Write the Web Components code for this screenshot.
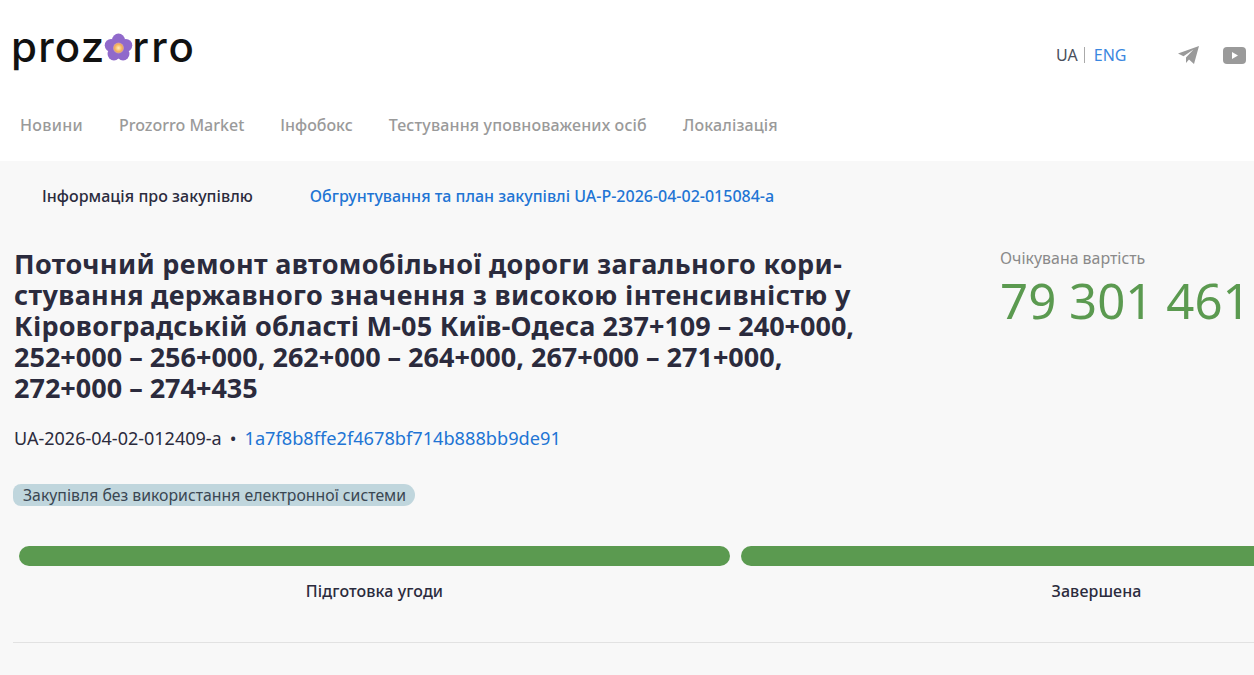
<!DOCTYPE html>
<html lang="uk">
<head>
<meta charset="utf-8">
<title>Prozorro</title>
<style>
  html, body{ margin: 0; height: 675px; overflow: hidden; background: #f8f8f8; }
  body{ font-family: "Noto Sans", sans-serif; color: #2b2b3d; }
</style>
</head>
<body>
<site-header></site-header>
<tender-page></tender-page>

<script>
class SiteLogo extends HTMLElement{
  constructor(){
    super();
    this.attachShadow({ mode: 'open' });
    this.shadowRoot.innerHTML = `
      <style>
        :host{ display: flex; align-items: center; height: 44px; margin-left: -1px; font-family: "Inter", sans-serif; font-weight: 500; font-size: 42px; line-height: 44px; color: #111; }
        span{ letter-spacing: 1.2px; }
        span.end{ letter-spacing: 2px; }
        svg{ width: 31px; height: 31px; margin: 1px -2px 0 -2px; flex: none; }
      </style>
      <span>proz</span>
      <svg viewBox="0 0 32 32">
        <defs>
          <radialGradient id="mid">
            <stop offset="0" stop-color="#ffedb8"/>
            <stop offset=".7" stop-color="#f4ae55"/>
            <stop offset="1" stop-color="#c89ab0"/>
          </radialGradient>
        </defs>
        <g fill="#9069cb">
          <circle cx="16" cy="8.2" r="6.6"/>
          <circle cx="23.6" cy="13.8" r="6.6"/>
          <circle cx="20.7" cy="22.8" r="6.6"/>
          <circle cx="11.3" cy="22.8" r="6.6"/>
          <circle cx="8.4" cy="13.8" r="6.6"/>
        </g>
        <circle cx="16" cy="16.5" r="5.6" fill="url(#mid)"/>
      </svg>
      <span class="end">rro</span>
    `;
  }
}
customElements.define('site-logo', SiteLogo);

class SiteHeader extends HTMLElement{
  constructor(){
    super();
    this.attachShadow({ mode: 'open' });
    this.shadowRoot.innerHTML = `
      <style>
        :host{ display: block; background: #fff; height: 161px; box-sizing: border-box; }
        .top{ display: flex; align-items: flex-start; height: 100px; padding: 25px 0 0 12px; box-sizing: border-box; }
        .right{ margin-left: auto; display: flex; align-items: center; padding-top: 19px; width: 198px; box-sizing: border-box; }
        .lang{ font-size: 16px; color: #4a4f5c; display: flex; align-items: center; }
        .lang i{ width: 1px; height: 16px; background: #aaa; margin: 0 9px 0 6px; }
        .lang a{ color: #3b87e0; }
        .tg{ width: 21px; height: 18px; margin-left: 52px; flex: none; }
        .yt{ width: 23px; height: 17px; margin-left: 24px; flex: none; }
        nav{ display: flex; gap: 36px; padding: 14px 0 0 20px; font-size: 16px; font-weight: 500; color: #9a9a9a; line-height: 22px; }
        .cy{ letter-spacing: .15px; }
        .wide{ letter-spacing: .3px; }
      </style>
      <div class="top">
        <site-logo></site-logo>
        <div class="right">
          <div class="lang">UA<i></i><a>ENG</a></div>
          <svg class="tg" viewBox="0 0 21 18"><path fill="#9a9a9a" d="M21 0 0 7.5l5.5 2.7L15.500 3.500 8 11.500V17l3-3.500 5 4.500z"/></svg>
          <svg class="yt" viewBox="0 0 23 17"><rect width="23" height="17" rx="4" fill="#9a9a9a"/><path fill="#fff" d="M9 5v7l6-3.500z"/></svg>
        </div>
      </div>
      <nav>
        <span class="wide">Новини</span>
        <span>Prozorro Market</span>
        <span>Інфобокс</span>
        <span class="cy">Тестування уповноважених осіб</span>
        <span class="cy">Локалізація</span>
      </nav>
    `;
  }
}
customElements.define('site-header', SiteHeader);

class TabBar extends HTMLElement{
  constructor(){
    super();
    this.attachShadow({ mode: 'open' });
    this.shadowRoot.innerHTML = `
      <style>
        :host{ display: flex; gap: 57px; padding-left: 42px; height: 86.5px; padding-top: 24px; box-sizing: border-box; font-size: 16px; font-weight: 500; line-height: 22px; color: #2b2b3d; }
        span{ letter-spacing: .04px; }
        a{ color: #2174d4; }
      </style>
      <span>Інформація про закупівлю</span>
      <a>Обгрунтування та план закупівлі UA-P-2026-04-02-015084-a</a>
    `;
  }
}
customElements.define('tab-bar', TabBar);

class StageBar extends HTMLElement{
  constructor(){
    super();
    this.attachShadow({ mode: 'open' });
    this.shadowRoot.innerHTML = `
      <style>
        :host{ display: block; flex: none; width: 711px; text-align: center; font-size: 16px; font-weight: 500; line-height: 22px; letter-spacing: .1px; color: #2b2b3d; }
        .bar{ height: 20px; border-radius: 10px; background: #5b9a50; margin-bottom: 14px; }
      </style>
      <div class="bar"></div>
      <slot></slot>
    `;
  }
}
customElements.define('stage-bar', StageBar);

class TenderPage extends HTMLElement{
  constructor(){
    super();
    this.attachShadow({ mode: 'open' });
    this.shadowRoot.innerHTML = `
      <style>
        :host{ display: block; background: #f8f8f8; overflow: hidden; }
        .head{ display: flex; padding-left: 14px; }
        .info{ flex: none; width: 850px; }
        h1{ margin: 0; font-size: 27px; line-height: 31.2px; font-weight: 700; color: #2b2b3d; white-space: nowrap; }
        .cyr{ letter-spacing: .34px; }
        .mix{ letter-spacing: .23px; }
        .ids{ margin-top: 22.500px; font-size: 18px; line-height: 24px; display: flex; gap: 8px; white-space: nowrap; color: #2b2b3d; }
        .ids a{ color: #2174d4; font-size: 18.2px; }
        .tag{ display: inline-block; margin: 34px 0 0 -1px; padding: 0 9px 0 10px; height: 22px; line-height: 22px; border-radius: 8px 11px 11px 8px; background: #c0d6dd; font-size: 15.8px; color: #3a4652; white-space: nowrap; }
        .price{ flex: none; margin-left: 136px; padding-top: .5px; white-space: nowrap; }
        .price small{ display: block; font-size: 15.9px; line-height: 20px; color: #8a8a8a; }
        .price b{ display: block; font-weight: 400; font-size: 49.2px; line-height: 64px; color: #5b9a50; }
        .stages{ display: flex; gap: 11px; margin: 40px 0 0 19px; width: 1500px; }
        hr{ border: 0; height: 1px; background: #e2e2e2; margin: 40px 0 0 13px; }
      </style>
      <tab-bar></tab-bar>
      <div class="head">
        <div class="info">
          <h1><span class="cyr">Поточний ремонт автомобільної дороги загального кори-</span><br><span class="cyr">стування державного значення з високою інтенсивністю у</span><br><span class="mix">Кіровоградській області М-05 Київ-Одеса</span> 237+109 – 240+000,<br>252+000 – 256+000, 262+000 – 264+000, 267+000 – 271+000,<br>272+000 – 274+435</h1>
          <div class="ids"><span>UA-2026-04-02-012409-a</span><span>•</span><a>1a7f8b8ffe2f4678bf714b888bb9de91</a></div>
          <span class="tag">Закупівля без використання електронної системи</span>
        </div>
        <div class="price">
          <small>Очікувана вартість</small>
          <b>79 301 461</b>
        </div>
      </div>
      <div class="stages">
        <stage-bar>Підготовка угоди</stage-bar>
        <stage-bar>Завершена</stage-bar>
      </div>
      <hr>
    `;
  }
}
customElements.define('tender-page', TenderPage);
</script>
</body>
</html>
